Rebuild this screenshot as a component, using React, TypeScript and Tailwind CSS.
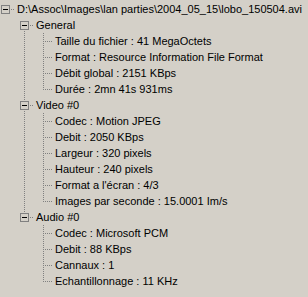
import React from "react";

type Node = { label: string; children?: Node[] };

const tree: Node = {
  label: "D:\\Assoc\\Images\\lan parties\\2004_05_15\\lobo_150504.avi",
  children: [
    {
      label: "General",
      children: [
        { label: "Taille du fichier : 41 MegaOctets" },
        { label: "Format : Resource Information File Format" },
        { label: "Débit global : 2151 KBps" },
        { label: "Durée : 2mn 41s 931ms" },
      ],
    },
    {
      label: "Video #0",
      children: [
        { label: "Codec : Motion JPEG" },
        { label: "Debit : 2050 KBps" },
        { label: "Largeur : 320 pixels" },
        { label: "Hauteur : 240 pixels" },
        { label: "Format a l'écran : 4/3" },
        { label: "Images par seconde : 15.0001 Im/s" },
      ],
    },
    {
      label: "Audio #0",
      children: [
        { label: "Codec : Microsoft PCM" },
        { label: "Debit : 88 KBps" },
        { label: "Cannaux : 1" },
        { label: "Echantillonnage : 11 KHz" },
      ],
    },
  ],
};

const LINE = "#808080";

// dotted vertical run of pixels at column x, rows from..to (exclusive)
function vDots(x: number, from: number, to: number) {
  const out: React.ReactElement[] = [];
  for (let y = from; y < to; y++) {
    if (y % 2 === 0) out.push(<rect key={`v${x}-${y}`} x={x} y={y} width={1} height={1} fill={LINE} />);
  }
  return out;
}

function hDots(y: number, from: number, to: number) {
  const out: React.ReactElement[] = [];
  for (let x = from; x < to; x++) {
    if (x % 2 === 1) out.push(<rect key={`h${x}-${y}`} x={x} y={y} width={1} height={1} fill={LINE} />);
  }
  return out;
}

// indent column: just a vertical guide if the ancestor keeps going
function Guide({ on }: { on: boolean }) {
  return (
    <svg width={19} height={16} className="shrink-0 block">
      {on && vDots(5, 0, 16)}
    </svg>
  );
}

function Connector({
  expandable,
  up,
  down,
}: {
  expandable: boolean;
  up: boolean;
  down: boolean;
}) {
  return (
    <svg width={17} height={16} className="shrink-0 block">
      {up && vDots(5, 0, expandable ? 4 : 9)}
      {down && vDots(5, expandable ? 13 : 8, 16)}
      {expandable ? (
        <>
          <rect x={1.5} y={4.5} width={8} height={8} fill="none" stroke={LINE} />
          <rect x={3} y={8} width={5} height={1} fill="#000" />
          {hDots(8, 11, 15)}
        </>
      ) : (
        hDots(8, 6, 15)
      )}
    </svg>
  );
}

type Row = { label: string; guides: boolean[]; expandable: boolean; up: boolean; down: boolean };

function flatten(): Row[] {
  const rows: Row[] = [];
  rows.push({ label: tree.label, guides: [], expandable: true, up: false, down: false });
  const groups = tree.children!;
  groups.forEach((g, gi) => {
    const lastGroup = gi === groups.length - 1;
    rows.push({ label: g.label, guides: [false], expandable: true, up: gi > 0, down: !lastGroup });
    g.children!.forEach((c, ci) => {
      const lastChild = ci === g.children!.length - 1;
      rows.push({ label: c.label, guides: [false, !lastGroup], expandable: false, up: true, down: !lastChild });
    });
  });
  return rows;
}

export default function App() {
  const rows = flatten();
  return (
    <div className="w-[308px] h-[297px] bg-[#d4d0c8] overflow-hidden pt-px font-['Liberation_Sans',Arial,sans-serif] text-[11px] text-black">
      {rows.map((r, i) => (
        <div key={i} className="flex items-center h-4">
          {r.guides.map((g, j) => (
            <Guide key={j} on={g} />
          ))}
          <Connector expandable={r.expandable} up={r.up} down={r.down} />
          <span className="whitespace-nowrap leading-4">{r.label}</span>
        </div>
      ))}
    </div>
  );
}
